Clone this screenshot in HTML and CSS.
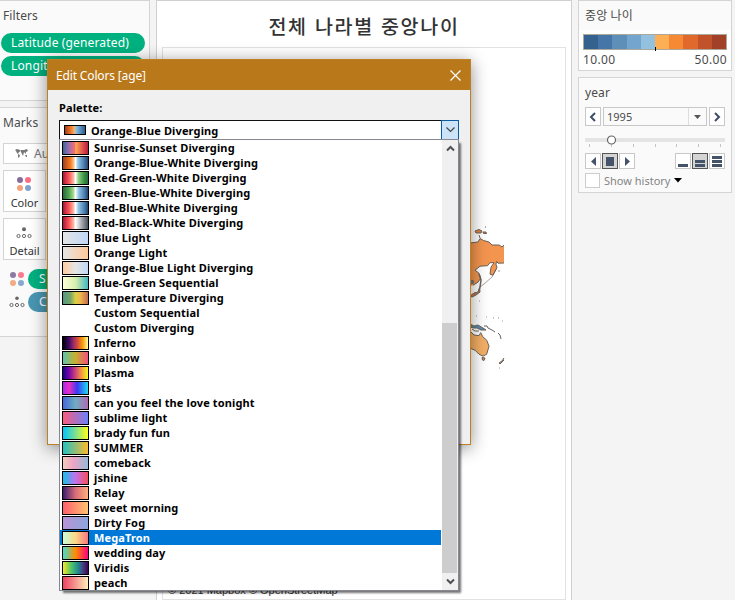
FILE: index.html
```html
<!DOCTYPE html>
<html lang="ko">
<head>
<meta charset="utf-8">
<title>전체 나라별 중앙나이</title>
<link rel="stylesheet" href="styles.css">
</head>
<body>
<div class="workspace">
  <aside class="left">
    <section class="card filters">
      <h2>Filters</h2>
      <div class="pill green">Latitude (generated)</div>
      <div class="pill green">Longit</div>
    </section>
    <section class="card marks">
      <h2>Marks</h2>
      <div class="marktype">
        <svg width="13" height="10" viewBox="0 0 13 10"><path d="M0 1l2-1 3 1 1 1-2 1-1 2-1-1-1-2zM3 5l2 1-1 3-1-1zM6 1l3 0 3-1 1 2-2 1v2l-1-1-1-1-1 4-1-2-1-2zM10 6l2 0 0 2-1 0z" fill="#777"/></svg>
        <span>Au</span>
      </div>
      <div class="tile">
        <svg width="16" height="16" viewBox="0 0 16 16"><circle cx="4" cy="4" r="3" fill="#856c9b"/><circle cx="12" cy="4" r="3" fill="#fb6f84"/><circle cx="4" cy="12" r="3" fill="#f3a37b"/><circle cx="12" cy="12" r="3" fill="#7fa3cd"/></svg>
        <span>Color</span>
      </div>
      <div class="tile detail">
        <svg width="16" height="12" viewBox="0 0 16 12"><circle cx="8" cy="2.3" r="2" fill="#666"/><g fill="none" stroke="#666"><circle cx="2.5" cy="9" r="1.6"/><circle cx="8" cy="9" r="1.6"/><circle cx="13.500" cy="9" r="1.6"/></g></svg>
        <span>Detail</span>
      </div>
      <div class="shelf">
        <svg width="16" height="16" viewBox="0 0 16 16"><circle cx="4" cy="4" r="3" fill="#8c7aa4"/><circle cx="12" cy="4" r="3" fill="#fb7b8e"/><circle cx="4" cy="12" r="3" fill="#f3ab84"/><circle cx="12" cy="12" r="3" fill="#86a9d0"/></svg>
        <div class="pill green">S</div>
      </div>
      <div class="shelf">
        <svg width="16" height="12" viewBox="0 0 16 12"><circle cx="8" cy="2.300" r="1.800" fill="#666"/><g fill="none" stroke="#666"><circle cx="2.500" cy="9" r="1.600"/><circle cx="8" cy="9" r="1.600"/><circle cx="13.500" cy="9" r="1.600"/></g></svg>
        <div class="pill blue">C</div>
      </div>
    </section>
  </aside>

  <main class="sheet">
    <h1>전체 나라별 중앙나이</h1>
    <div class="map">
      <svg class="land" width="404" height="551" viewBox="162 47 404 551">
        <path d="M470 243l8-1 2-3.500 3.500 2L489 242l3 3h7l3 2 2-2v18l-6 .2-1.500-2-.5 3 1 3.500-4 7.500-3-1 1-7 3-4.500h-4l-2.500 3-7.500.5-5 4 4 3 1.700 5-2.700 4-5 3-3 1z" fill="#f3954f"/>
        <path d="M470 331l4 4 5 .7 1.700-3 2 4 4 3.500 2.300 6-2.300 8-3.700 2-4-2-4-4-5-2z" fill="#f3af66"/>
        <g stroke="#6b625b" stroke-width="1" stroke-linejoin="round" fill="none">
          <path d="M470 243l8-1 2-3.500 3.500 2L489 242l3 3h7l3 2 2-2M504 263l-6 .2-1.500-2-.5 3 1 3.500-4 7.500-3-1 1-7 3-4.500h-4l-2.500 3-7.500.5-5 4 4 3 1.700 5-2.700 4-5 3"/>
          <path d="M496 269l-4 8-8 7-4 3" stroke-width=".6"/>
          <path d="M479 274l2 6-1 7-1 4" stroke-width="1.500"/>
          <path d="M470 296l4-3 4-1 1.500-4 .5 4-4 3-4 2z" fill="#c7754c"/>
          <path d="M470 281l3-.5.500 2.500-3 .5z" fill="#5c9dc0"/>
          <path d="M475 231l4-1.500 3 1.500-1 2-5 0zM483 232l3 0 .5 1.500-3 0zM479 235l1 3M485 227h1" fill="#e2813e"/>
          <path d="M470 324l4 2 4-1 5 3 3 2-5 0-4-2-3 0-4-1z" fill="#5a8caf"/>
          <path d="M484 326l3 0 1 2 4 2 3 2M498 333l2 2 1 4"/>
          <path d="M470 331l4 4 5 .7 1.700-3 2 4 4 3.500 2.300 6-2.300 8-3.700 2-4-2-4-4-5-2M472 329l3 2 4 0"/>
          <path d="M482 357.500l3 .5-1 2.500-1.500-.5zM504 358l-2 3-3 2 1 1 4-4" fill="#dc9652"/>
        </g>
        <path d="M498 271h2M479 301h1M476 316h1M486 317h1M493 318h1M498 318h1M502 321h1M499 368h1" stroke="#999"/>
      </svg>
      <span class="credit">© 2021 Mapbox © OpenStreetMap</span>
    </div>
  </main>

  <aside class="right">
    <section class="card legend">
      <h2>중앙 나이</h2>
      <div class="legend-body">
        <div class="ramp"><i class="c0"></i><i class="c1"></i><i class="c2"></i><i class="c3"></i><i class="c4"></i><i class="c5"></i><i class="c6"></i><i class="c7"></i><i class="c8"></i><i class="c9"></i><b class="center"></b></div>
        <div class="range"><span>10.00</span><span>50.00</span></div>
      </div>
    </section>
    <section class="card year">
      <h2>year</h2>
      <div class="picker">
        <button><svg width="8" height="10" viewBox="0 0 8 10"><path d="M6 1L2 5l4 4" fill="none" stroke="#3f4e66" stroke-width="2"/></svg></button>
        <div class="select"><span>1995</span><em><svg width="8" height="4" viewBox="0 0 8 4"><path d="M0 0h7l-3.500 4z" fill="#555"/></svg></em></div>
        <button><svg width="8" height="10" viewBox="0 0 8 10"><path d="M2 1l4 4-4 4" fill="none" stroke="#3f4e66" stroke-width="2"/></svg></button>
      </div>
      <svg class="slider" width="140" height="15" viewBox="0 0 140 15"><path d="M0 5h140" stroke="#e4e4e4" stroke-width="4"/><path d="M4.500 9v3M26.500 9v3M48.500 9v3M70.500 9v3M91.500 9v3M113.500 9v3M135.500 9v3" stroke="#c4c4c4"/><circle cx="26.500" cy="5" r="4" fill="#fff" stroke="#666" stroke-width="1.200"/></svg>
      <div class="transport">
        <button><svg width="5" height="9" viewBox="0 0 5 9"><path d="M5 0v9L0 4.500z" fill="#44536a"/></svg></button>
        <button class="on"><svg width="8" height="9"><rect width="8" height="9" fill="#44536a"/></svg></button>
        <button><svg width="5" height="9" viewBox="0 0 5 9"><path d="M0 0v9l5-4.500z" fill="#44536a"/></svg></button>
        <span class="gap"></span>
        <button><svg width="10" height="11"><path d="M0 9.500h10" stroke="#44536a" stroke-width="3"/></svg></button>
        <button class="on"><svg width="10" height="11"><path d="M0 5.500h10M0 9.500h10" stroke="#44536a" stroke-width="3"/></svg></button>
        <button><svg width="10" height="11"><path d="M0 1.500h10M0 5.500h10M0 9.500h10" stroke="#44536a" stroke-width="3"/></svg></button>
      </div>
      <div class="history"><i></i><span>Show history</span><svg width="8" height="5" viewBox="0 0 8 5"><path d="M0 0h8L4 4.500z" fill="#000"/></svg></div>
    </section>
  </aside>
</div>

<div class="dialog">
  <header><span>Edit Colors [age]</span><svg width="11" height="11" viewBox="0 0 11 11"><path d="M.5.500l10 10M10.500.500l-10 10" stroke="#fff" stroke-width="1.200"/></svg></header>
  <div class="dialog-body">
    <label>Palette:</label>
    <div class="combo">
      <i class="mini p-ob"></i><span>Orange-Blue Diverging</span>
      <b><svg width="9" height="6" viewBox="0 0 9 6"><path d="M.5.500l4 4 4-4" fill="none" stroke="#444" stroke-width="1.200"/></svg></b>
    </div>
  </div>
  <div class="menu">
    <ul>
      <li><i class="p-sunrise"></i>Sunrise-Sunset Diverging</li>
      <li><i class="p-obw"></i>Orange-Blue-White Diverging</li>
      <li><i class="p-rgw"></i>Red-Green-White Diverging</li>
      <li><i class="p-gbw"></i>Green-Blue-White Diverging</li>
      <li><i class="p-rbw"></i>Red-Blue-White Diverging</li>
      <li><i class="p-rkw"></i>Red-Black-White Diverging</li>
      <li><i class="p-bl"></i>Blue Light</li>
      <li><i class="p-ol"></i>Orange Light</li>
      <li><i class="p-obl"></i>Orange-Blue Light Diverging</li>
      <li><i class="p-bg"></i>Blue-Green Sequential</li>
      <li><i class="p-temp"></i>Temperature Diverging</li>
      <li><i class="none"></i>Custom Sequential</li>
      <li><i class="none"></i>Custom Diverging</li>
      <li><i class="p-inferno"></i>Inferno</li>
      <li><i class="p-rainbow"></i>rainbow</li>
      <li><i class="p-plasma"></i>Plasma</li>
      <li><i class="p-bts"></i>bts</li>
      <li><i class="p-love"></i>can you feel the love tonight</li>
      <li><i class="p-sublime"></i>sublime light</li>
      <li><i class="p-brady"></i>brady fun fun</li>
      <li><i class="p-summer"></i>SUMMER</li>
      <li><i class="p-comeback"></i>comeback</li>
      <li><i class="p-jshine"></i>jshine</li>
      <li><i class="p-relay"></i>Relay</li>
      <li><i class="p-sweet"></i>sweet morning</li>
      <li><i class="p-fog"></i>Dirty Fog</li>
      <li class="selected"><i class="p-mega"></i>MegaTron</li>
      <li><i class="p-wedding"></i>wedding day</li>
      <li><i class="p-viridis"></i>Viridis</li>
      <li><i class="p-peach"></i>peach</li>
    </ul>
    <div class="scroll">
      <svg width="9" height="7" viewBox="0 0 9 7"><path d="M1 5.500l3.500-3.500L8 5.500" fill="none" stroke="#505050" stroke-width="2"/></svg>
      <div class="thumb"></div>
      <svg width="9" height="7" viewBox="0 0 9 7"><path d="M1 1.500L4.500 5 8 1.500" fill="none" stroke="#505050" stroke-width="2"/></svg>
    </div>
  </div>
</div>
</body>
</html>
```

FILE: styles.css
```css
* { box-sizing: border-box; }
body { margin: 0; width: 735px; height: 600px; overflow: hidden; position: relative; background: #f4f4f4; color: #4b4b4b; font: 12px "Noto Sans", "Noto Sans CJK KR", sans-serif; }
h1, h2, ul { margin: 0; padding: 0; }
svg { display: block; flex: none; }
.workspace { display: grid; grid-template-columns: 150px 416px 154px; column-gap: 6px; height: 600px; }
.card { border: 1px solid #d4d4d4; background: #fafafa; }
h2 { font-size: 12px; font-weight: normal; line-height: 16px; letter-spacing: .1px; }

.left .card { border-left: 0; padding-left: 3px; }
.filters { height: 101px; padding-top: 7px; }
.filters .pill { margin: 0 0 3px -2px; width: 144px; padding-left: 10px; letter-spacing: .15px; }
.filters h2 { margin-bottom: 9px; }
.pill { height: 20px; line-height: 20px; border-radius: 10px; color: #fff; white-space: nowrap; overflow: hidden; }
.green { background: #00b180; }
.blue { background: #4996b2; }
.marks { margin-top: 6px; height: 230px; padding-top: 7px; }
.marktype { display: flex; align-items: center; gap: 6px; width: 140px; height: 21px; margin-top: 12px; padding-left: 11px; border: 1px solid #d4d4d4; background: #fff; }
.marktype span { color: #777; }
.tile { display: flex; flex-direction: column; align-items: center; justify-content: space-between; width: 43px; height: 42px; margin-top: 6px; padding: 5px 0 1px; border: 1px solid #d4d4d4; background: #fff; font-size: 11px; line-height: 15px; color: #333; }
.tile svg { margin-left: -2px; }
.tile.detail { padding-top: 8px; }
.shelf { display: flex; align-items: center; gap: 3px; height: 20px; margin: 3px 0 0 6px; }
.tile + .shelf { margin-top: 9px; }
.shelf .pill { width: 112px; padding-left: 11px; }

.sheet { border: 1px solid #d0d0d0; border-bottom: 0; background: #fff; }
h1 { height: 46px; text-align: center; color: #333; font: 500 19.500px/49px "Noto Sans CJK KR", sans-serif; letter-spacing: 1.700px; }
.map { position: relative; margin-left: 5px; width: 404px; height: 553px; border: 1px solid #e2e2e2; overflow: hidden; }
.land { margin: -1px; }
.credit { position: absolute; left: 5px; bottom: 2px; font: 11px/14px "Liberation Sans", sans-serif; color: #333; }

.legend { height: 71px; }
.legend h2 { padding: 7px 0 0 6px; height: 29px; }
.legend-body { height: 40px; padding: 4px 4px 0 4px; background: #fff; }
.ramp { position: relative; display: flex; height: 16px; border: 1px solid #aaa99b; }
.ramp i { flex: 1; }
.center { position: absolute; left: 71px; top: 12px; width: 1px; height: 4px; background: #000; }
.c0 { background: #34618d; } .c1 { background: #4676a7; } .c2 { background: #5e8fb9; } .c3 { background: #73a5cf; } .c4 { background: #92c2df; }
.c5 { background: #feaf56; } .c6 { background: #f68a34; } .c7 { background: #e0692b; } .c8 { background: #c25229; } .c9 { background: #a04128; }
.range { display: flex; justify-content: space-between; line-height: 19px; letter-spacing: .35px; font-size: 12px; }
.year { margin-top: 6px; height: 116px; padding: 7px 6px 0; }
.picker { display: flex; gap: 2px; height: 19px; margin-top: 6px; }
button { display: flex; align-items: center; justify-content: center; width: 16px; height: 19px; padding: 0; border: 1px solid #c8c8c8; background: #fff; }
.select { flex: 1; display: flex; justify-content: space-between; border: 1px solid #c8c8c8; line-height: 18px; padding-left: 3px; font-size: 11px; }
.select em { display: flex; align-items: center; justify-content: center; width: 18px; border-left: 1px solid #ddd; }
.slider { margin-top: 9px; }
.transport { display: flex; gap: 1px; margin-top: 3px; }
.transport button { height: 16px; }
.transport .on { border-color: #555; background: #d4d4d4; }
.gap { flex: 1; }
.history { display: flex; align-items: center; gap: 4px; margin-top: 4px; color: #858585; line-height: 15px; font-size: 11px; }
.history i { width: 15px; height: 15px; border: 1px solid #ccc; background: #fff; }

.dialog { position: absolute; left: 47px; top: 59px; width: 424px; height: 386px; border: 1px solid #bd8124; background: #f0f0f0; box-shadow: 0 3px 16px rgba(0,0,0,.45); font-weight: bold; font-size: 11px; letter-spacing: .13px; color: #000; }
.dialog header { display: flex; align-items: center; justify-content: space-between; height: 30px; padding: 0 9px 0 8px; background: #b9791b; color: #fff; font-weight: normal; font-size: 12px; letter-spacing: -.15px; }
.dialog-body { padding: 10px 11px; }
label { display: block; line-height: 16px; }
.combo { display: flex; align-items: center; width: 400px; height: 20px; margin-top: 4px; padding-left: 4px; border: 1px solid #111; border-bottom-color: #888; background: #fff; }
.combo .mini { width: 22px; height: 10px; border: 1px solid #000; }
.combo span { flex: 1; padding: 0 0 0 5px; }
.combo b { display: flex; align-items: center; justify-content: center; width: 18px; height: 20px; margin-right: -1px; border: 1px solid #0b5aa3; background: #cce4f7; }
.menu { position: absolute; left: 11px; top: 79px; width: 400px; height: 452px; display: flex; background: #fff; border: 1px solid #858891; box-shadow: 3px 3px 2px -1px rgba(0,0,0,.55); }
.menu ul { flex: 1; list-style: none; }
li { display: flex; align-items: center; height: 15px; line-height: 15px; padding-left: 2px; gap: 5px; white-space: nowrap; }
li i { width: 27px; height: 14px; margin-top: 1px; border: 1px solid #000; }
li i.none { border: 0; }
.selected { background: #0078d7; color: #fff; margin-right: 1px; }
.scroll { display: flex; flex-direction: column; align-items: center; width: 16px; padding: 5px 0; background: #f0f0f0; }
.thumb { width: 15px; height: 250px; margin: auto 1px 5px 0; background: #cdcdcd; }

.p-ob { background: linear-gradient(90deg,#9e3d22,#e66c24,#ffb35d 48%,#93c7e4 52%,#5d91bf,#2b5c8a); }
.p-sunrise { background: linear-gradient(90deg,#3c659e,#a070ae 25%,#f56d72 46%,#f9a951 51%,#e45d4d 75%,#b71d3e); }
.p-obw { background: linear-gradient(90deg,#9e3d22,#f77b20 30%,#ffc18a 43%,#fff 50%,#90c5e3 60%,#5489ba 80%,#26456e); }
.p-rgw { background: linear-gradient(90deg,#ae123a,#fb5a59 25%,#ffb7a3 42%,#fff 50%,#8bcb7b 63%,#368f43 85%,#24693d); }
.p-gbw { background: linear-gradient(90deg,#24693d,#58a956 25%,#a7dd91 42%,#fff 50%,#8ec2e1 63%,#4e80b4 85%,#26456e); }
.p-rbw { background: linear-gradient(90deg,#ae123a,#fb5a59 25%,#ffb7a3 42%,#fff 50%,#8ec2e1 63%,#4e80b4 85%,#26456e); }
.p-rkw { background: linear-gradient(90deg,#ae123a,#fb5a59 25%,#ffb7a3 42%,#fff 50%,#b6b9bb 70%,#49525e); }
.p-bl { background: linear-gradient(90deg,#e5e5e5,#c1d7f6); }
.p-ol { background: linear-gradient(90deg,#e5e5e5,#ffc999); }
.p-obl { background: linear-gradient(90deg,#ffcc9e,#e5e5e5,#c1d7f6); }
.p-bg { background: linear-gradient(90deg,#feffd9,#d7efae,#41b7c4); }
.p-temp { background: linear-gradient(90deg,#529985,#77a567 30%,#dbcf47 50%,#eeb64b 70%,#c26b51); }
.p-inferno { background: linear-gradient(90deg,#000004,#420a68 25%,#932667 40%,#dd513a 60%,#fca50a 80%,#fcffa4); }
.p-rainbow { background: linear-gradient(90deg,#5cc4ae,#c7b02d 50%,#f1517e); }
.p-plasma { background: linear-gradient(90deg,#0d0887,#7e03a8 25%,#cc4778 50%,#f89540 73%,#f0f921); }
.p-bts { background: linear-gradient(90deg,#a12af4,#ed2ec1 25%,#3a3af5 57%,#20dcee); }
.p-love { background: linear-gradient(90deg,#4568dc,#70adc0 50%,#b06ab3); }
.p-sublime { background: linear-gradient(90deg,#fc5c7d,#6a82fb); }
.p-brady { background: linear-gradient(90deg,#00c3ff,#ffff1c); }
.p-summer { background: linear-gradient(90deg,#22c1c3,#fdbb2d); }
.p-comeback { background: linear-gradient(90deg,#f1cdbb,#f0a4c5 40%,#94bbda); }
.p-jshine { background: linear-gradient(90deg,#12c2e9,#c471ed 50%,#f64f59); }
.p-relay { background: linear-gradient(90deg,#3a1c71,#d76d77 50%,#ffaf7b); }
.p-sweet { background: linear-gradient(90deg,#ff5f6d,#ffc371); }
.p-fog { background: linear-gradient(90deg,#b993d6,#8ca6db); }
.p-mega { background: linear-gradient(90deg,#c6ffdd,#fbd786 50%,#f7797d); }
.p-wedding { background: linear-gradient(90deg,#40e0d0,#ff8c00 50%,#ff0080); }
.p-viridis { background: linear-gradient(90deg,#fde725,#5ec962 30%,#21918c 58%,#3b528b 75%,#440154); }
.p-peach { background: linear-gradient(90deg,#ed4264,#ffedbc); }
```
